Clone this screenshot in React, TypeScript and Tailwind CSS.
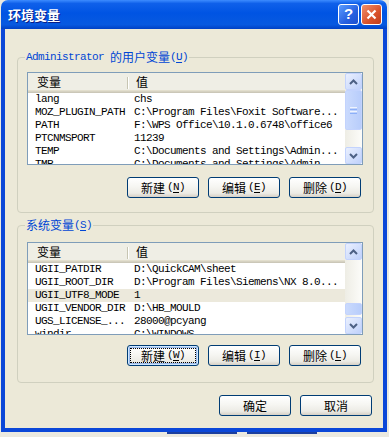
import clsx from 'clsx'

const mono = "font-['Liberation_Mono','DejaVu_Sans_Mono',monospace] text-[11px] tracking-[-0.6px]"
const cjk = "font-['Noto_Sans_CJK_SC','Noto_Sans_CJK_JP',sans-serif] text-[12px]"

type Row = [string, string]

const userVars: Row[] = [
  ['lang', 'chs'],
  ['MOZ_PLUGIN_PATH', 'C:\\Program Files\\Foxit Software...'],
  ['PATH', 'F:\\WPS Office\\10.1.0.6748\\office6'],
  ['PTCNMSPORT', '11239'],
  ['TEMP', 'C:\\Documents and Settings\\Admin...'],
  ['TMP', 'C:\\Documents and Settings\\Admin...'],
]

const systemVars: Row[] = [
  ['UGII_PATDIR', 'D:\\QuickCAM\\sheet'],
  ['UGII_ROOT_DIR', 'D:\\Program Files\\Siemens\\NX 8.0...'],
  ['UGII_UTF8_MODE', '1'],
  ['UGII_VENDOR_DIR', 'D:\\HB_MOULD'],
  ['UGS_LICENSE_...', '28000@pcyang'],
  ['windir', 'C:\\WINDOWS'],
]

const Key = ({ k }: { k: string }) => (
  <span className={mono}>
    (<span className="underline underline-offset-2">{k}</span>)
  </span>
)

const Chevron = ({ up }: { up?: boolean }) => (
  <svg width="9" height="6" viewBox="0 0 9 6">
    <polyline
      points={up ? '1,5 4.5,1.5 8,5' : '1,1 4.5,4.5 8,1'}
      fill="none"
      stroke="#4d6185"
      strokeWidth="2"
    />
  </svg>
)

const ArrowButton = ({ up }: { up?: boolean }) => (
  <div className="flex h-[17px] items-center justify-center rounded-[2px] border border-[#c3d3fd] bg-[linear-gradient(135deg,#eaf0fe,#bfd1fb)]">
    <Chevron up={up} />
  </div>
)

const Scrollbar = ({ thumbClass, grip }: { thumbClass: string; grip?: boolean }) => (
  <div className="flex w-[17px] flex-col bg-[linear-gradient(90deg,#eeede5,#fcfcf9)]">
    <ArrowButton up />
    <div className="flex-1">
      <div
        className={clsx(
          'flex flex-col items-center justify-center gap-[1px] rounded-[2px] border border-[#c3d3fd] bg-[linear-gradient(90deg,#cadafd,#b8cdfb)]',
          thumbClass
        )}
      >
        {grip && (
          <>
            <div className="h-[1px] w-[7px] bg-[#eef4fe]" />
            <div className="h-[1px] w-[7px] bg-[#8cb0f8]" />
            <div className="h-[1px] w-[7px] bg-[#eef4fe]" />
            <div className="h-[1px] w-[7px] bg-[#8cb0f8]" />
          </>
        )}
      </div>
    </div>
    <ArrowButton />
  </div>
)

const VarList = ({
  rows,
  selected,
  thumbClass,
  grip,
}: {
  rows: Row[]
  selected?: number
  thumbClass: string
  grip?: boolean
}) => (
  <div className="flex h-[93px] border border-[#7f9db9] bg-white">
    <div className="flex-1 overflow-hidden">
      <div className="flex h-[20px] items-stretch bg-[#efeee5] shadow-[inset_0_-1px_0_#cbc7b8,inset_0_-2px_0_#d6d2c2,inset_0_-3px_0_#e2decd]">
        <div className={clsx('flex w-[99px] items-center pl-[9px] pb-[2px]', cjk)}>变量</div>
        <div className="my-[4px] w-[2px] border-l border-[#c7c5b2] bg-white" />
        <div className={clsx('flex items-center pl-[7px] pb-[2px]', cjk)}>值</div>
      </div>
      {rows.map(([name, value], i) => (
        <div
          key={name}
          className={clsx(
            'flex h-[13px] items-center whitespace-nowrap text-black',
            mono,
            i === selected && 'bg-[#ece9dc]'
          )}
        >
          <div className="w-[101px] pl-[7px]">{name}</div>
          <div className="pl-[5px]">{value}</div>
        </div>
      ))}
    </div>
    <Scrollbar thumbClass={thumbClass} grip={grip} />
  </div>
)

const XpButton = ({ children, isDefault }: { children: React.ReactNode; isDefault?: boolean }) => (
  <button
    className={clsx(
      'flex h-[21px] w-[72px] items-center justify-center gap-[2px] rounded-[3px] border border-[#003c74] bg-[linear-gradient(180deg,#ffffff_0%,#f6f6f2_45%,#ecebe5_80%,#d6d0c5_100%)] text-black',
      isDefault &&
        'shadow-[inset_0_0_0_1px_#cee7ff,inset_0_0_0_2px_#98b8ea] outline-1 outline-dotted outline-black outline-offset-[-4px]'
    )}
  >
    {children}
  </button>
)

const GroupBox = ({
  label,
  children,
  className,
}: {
  label: React.ReactNode
  children: React.ReactNode
  className?: string
}) => (
  <fieldset
    className={clsx(
      'w-[357px] rounded-[4px] border border-[#d0d0bf] pl-[9px] pr-[10px]',
      className
    )}
  >
    <legend className="ml-[-2px] flex items-center px-[1px] leading-[14px] text-[#0046d5]">
      {label}
    </legend>
    {children}
  </fieldset>
)

export default function App() {
  return (
    <div className="h-[437px] w-[389px] overflow-hidden bg-[#ebe9e0]">
      <div className="ml-[1px] w-[386px]">
        {/* Title bar */}
        <div className="flex h-[29px] items-center rounded-t-[7px] bg-[linear-gradient(180deg,#3d8cff_0%,#0f60ea_12%,#0054e3_45%,#0759e0_85%,#0041c4_100%)] pl-[7px] pr-[5px]">
          <span
            className={clsx(
              'flex-1 text-[13px] font-bold text-white [text-shadow:1px_1px_0_#0a1d86]',
              "font-['Noto_Sans_CJK_SC',sans-serif]"
            )}
          >
            环境变量
          </span>
          <div className="flex gap-[2px]">
            <div className="flex h-[21px] w-[21px] items-center justify-center rounded-[3px] border border-white bg-[linear-gradient(135deg,#5b9dff,#2660e0_60%,#1e50cf)] font-['Liberation_Sans',sans-serif] text-[15px] font-bold text-white">
              ?
            </div>
            <div className="flex h-[21px] w-[21px] items-center justify-center rounded-[3px] border border-white bg-[linear-gradient(135deg,#f0906c,#d9522b_60%,#c03d1c)]">
              <svg width="11" height="11" viewBox="0 0 11 11">
                <path d="M1.5 1.5 L9.5 9.5 M9.5 1.5 L1.5 9.5" stroke="white" strokeWidth="2.2" />
              </svg>
            </div>
          </div>
        </div>

        {/* Body */}
        <div className="h-[403px] border-x-4 border-b-4 border-[#0b47d8] bg-[#ece9d8] pl-[12px] pr-[9px] pt-[21px]">
          <GroupBox
            className="pt-[8px] pb-[14px]"
            label={
              <>
                <span className={mono}>Administrator&nbsp;</span>
                <span className={cjk}>的用户变量</span>
                <Key k="U" />
              </>
            }
          >
            <VarList rows={userVars} thumbClass="h-[40px]" grip />
            <div className="mt-[12px] mr-[2px] flex justify-end gap-[9px]">
              <XpButton>
                <span className={cjk}>新建</span>
                <Key k="N" />
              </XpButton>
              <XpButton>
                <span className={cjk}>编辑</span>
                <Key k="E" />
              </XpButton>
              <XpButton>
                <span className={cjk}>删除</span>
                <Key k="D" />
              </XpButton>
            </div>
          </GroupBox>

          <GroupBox
            className="mt-[5px] pt-[10px] pb-[16px]"
            label={
              <>
                <span className={cjk}>系统变量</span>
                <Key k="S" />
              </>
            }
          >
            <VarList rows={systemVars} selected={2} thumbClass="mt-[43px] h-[12px]" />
            <div className="mt-[10px] mr-[2px] flex justify-end gap-[9px]">
              <XpButton isDefault>
                <span className={cjk}>新建</span>
                <Key k="W" />
              </XpButton>
              <XpButton>
                <span className={cjk}>编辑</span>
                <Key k="I" />
              </XpButton>
              <XpButton>
                <span className={cjk}>删除</span>
                <Key k="L" />
              </XpButton>
            </div>
          </GroupBox>

          <div className="mt-[12px] flex justify-end gap-[9px] pr-[2px]">
            <XpButton>
              <span className={cjk}>确定</span>
            </XpButton>
            <XpButton>
              <span className={cjk}>取消</span>
            </XpButton>
          </div>
        </div>
      </div>

      <div className="flex gap-[10px] pl-[167px]">
        <div className="h-[2px] w-[70px] bg-[#1c3f9e]" />
        <div className="h-[2px] w-[70px] bg-[#1c3f9e]" />
      </div>
    </div>
  )
}
